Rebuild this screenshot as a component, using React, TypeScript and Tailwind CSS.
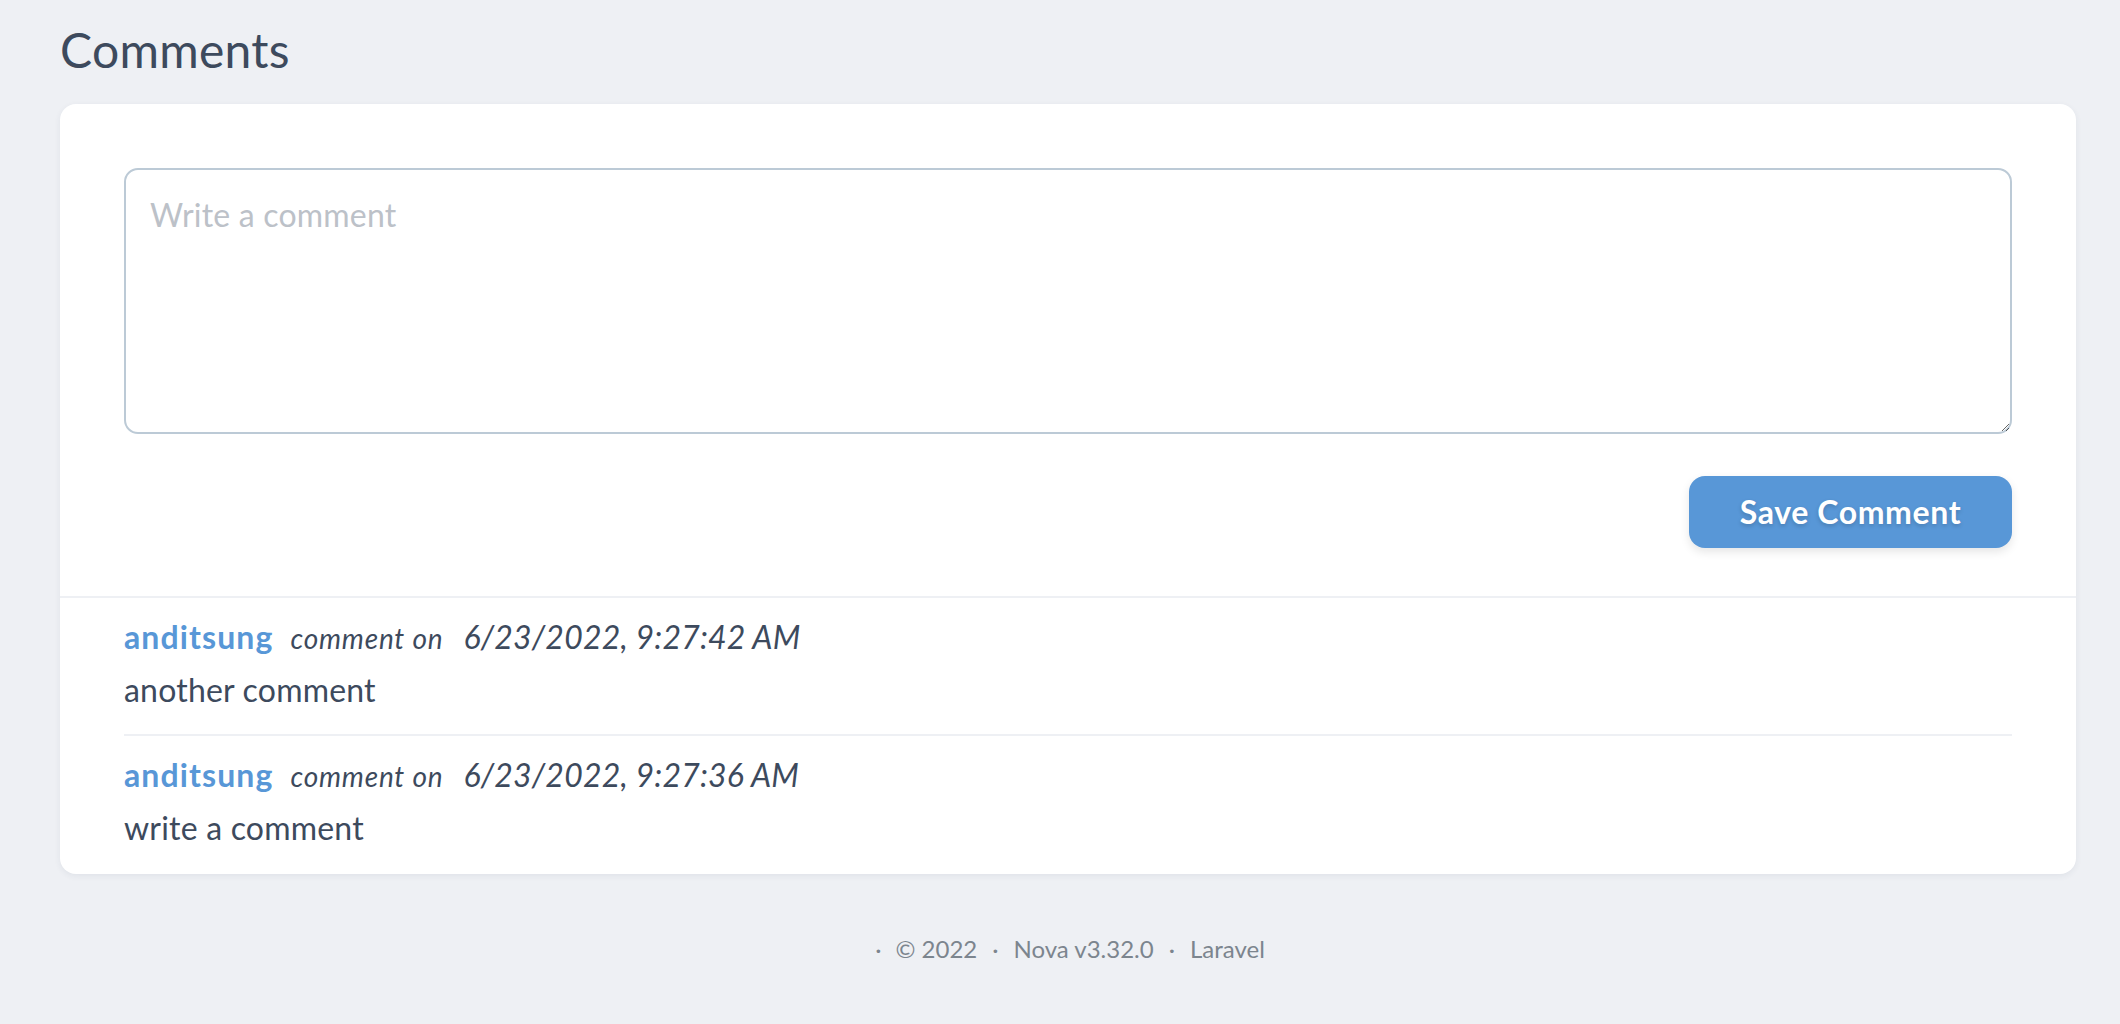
import { useState } from "react";

interface Comment {
  id: number;
  author: string;
  date: string;
  body: string;
}

const comments: Comment[] = [
  { id: 2, author: "anditsung", date: "6/23/2022, 9:27:42 AM", body: "another comment" },
  { id: 1, author: "anditsung", date: "6/23/2022, 9:27:36 AM", body: "write a comment" },
];

export default function App() {
  const [text, setText] = useState("");

  return (
    <div className="min-h-[1024px] bg-[#eef0f4] pl-[60px] pr-[44px] pt-[21px] font-['Lato','Open_Sans',sans-serif] text-[#3d4a5d]">
      <h1 className="mb-[25px] text-[48px] font-normal leading-[58px] tracking-[0.3px]">Comments</h1>

      <div className="rounded-[16px] bg-white shadow-[0_2px_6px_rgba(40,50,80,0.07)]">
        <div className="border-b-2 border-[#eef0f4] px-[64px] pt-[64px] pb-[48px]">
          <textarea
            value={text}
            onChange={(e) => setText(e.target.value)}
            placeholder="Write a comment"
            className="block h-[266px] w-full rounded-[14px] border-2 border-[#bccad6] bg-white px-[24px] pt-[21px] text-[32px] leading-[48px] tracking-[0.2px] text-[#3d4a5d] outline-none placeholder:text-[#bcc1c8]"
          />
          <div className="mt-[42px] flex justify-end">
            <button className="h-[72px] w-[323px] rounded-[16px] bg-[#5897d7] text-[32px] font-bold tracking-[0.6px] text-white shadow-[0_4px_10px_rgba(0,0,0,0.1)] [text-shadow:0_2px_4px_rgba(0,0,0,0.18)]">
              Save Comment
            </button>
          </div>
        </div>

        <div className="px-[64px]">
          {comments.map((c, i) => (
            <div
              key={c.id}
              className={
                i < comments.length - 1
                  ? "border-b-2 border-[#eef0f4] pt-[15px] pb-[20px]"
                  : "pt-[15px] pb-[22px]"
              }
            >
              <div className="flex items-baseline leading-[48px]">
                <span className="text-[32px] font-bold tracking-[1.1px] text-[#5897d7]">{c.author}</span>
                <span className="ml-[17px] text-[28px] italic tracking-[0.8px]">comment on</span>
                <span className="ml-[20px] text-[32px] italic tracking-[0.2px]">{c.date}</span>
              </div>
              <p className="mt-[4px] text-[32px] leading-[48px] tracking-[0.2px]">{c.body}</p>
            </div>
          ))}
        </div>
      </div>

      <footer className="mt-[57px] flex justify-center pl-[4px] text-[24px] leading-[36px] text-[#7c858e]">
        <span>·</span>
        <span className="ml-[14px]">© 2022</span>
        <span className="ml-[15px]">·</span>
        <span className="ml-[15px]">Nova v3.32.0</span>
        <span className="ml-[15px]">·</span>
        <span className="ml-[15px]">Laravel</span>
      </footer>
    </div>
  );
}
